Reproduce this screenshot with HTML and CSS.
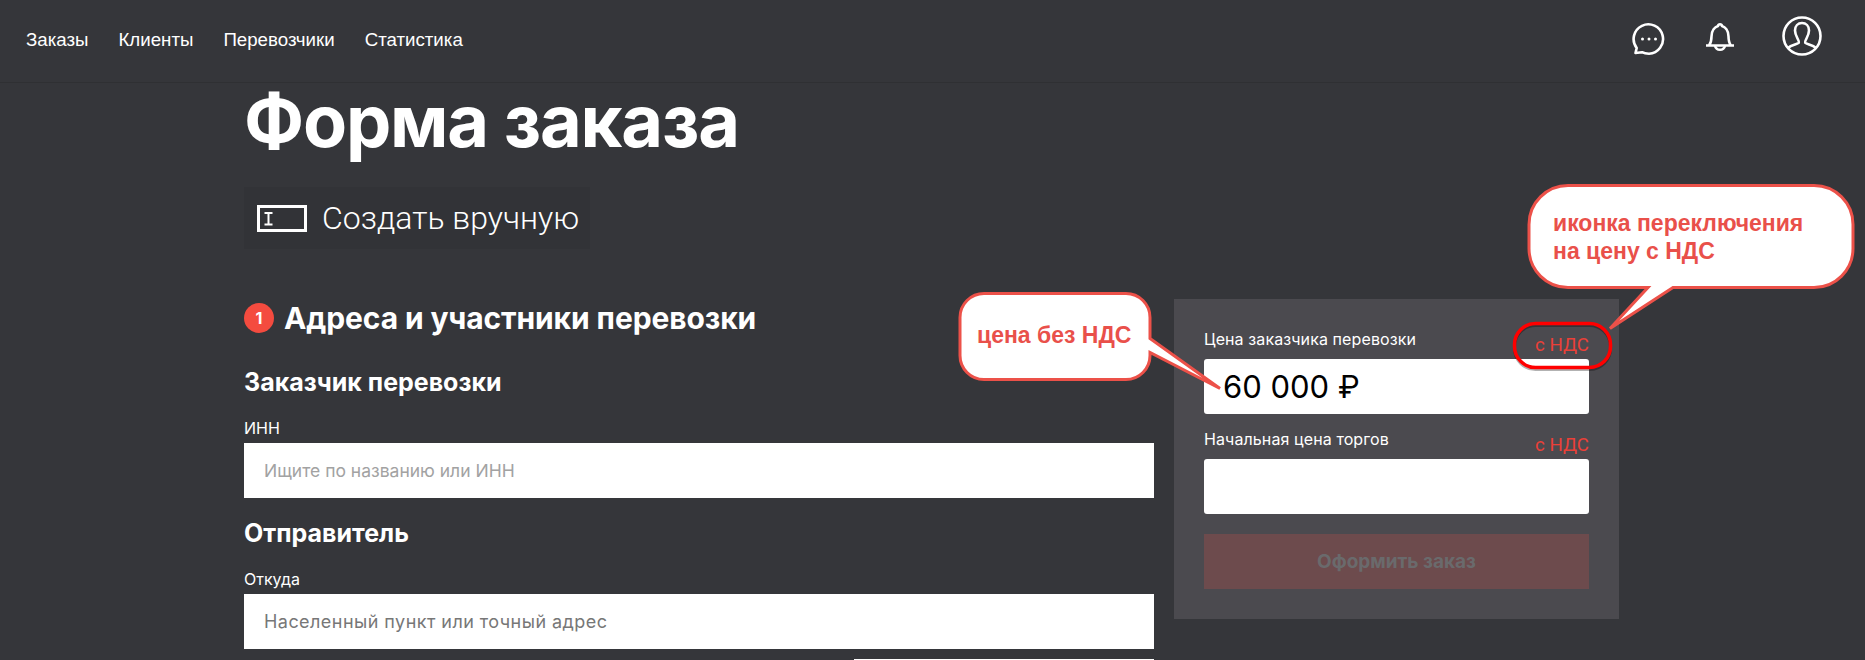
FILE: index.html
```html
<!DOCTYPE html>
<html lang="ru">
<head>
    <meta charset="UTF-8">
    <title>Форма заказа</title>
    <link rel="stylesheet" href="styles.css">
</head>
<body>
    <header class="topbar">
        <nav class="topnav">
            <a href="#">Заказы</a>
            <a href="#">Клиенты</a>
            <a href="#">Перевозчики</a>
            <a href="#">Статистика</a>
        </nav>
        <div class="topicons">
            <svg class="icon-chat" width="34" height="34" viewBox="0 0 34 34" fill="none" stroke="#fff" stroke-width="2.600">
                <path d="M3.500 31l1.200-5A14.700 14.700 0 1 1 17 31.700c-2.800 0-5-.4-7-1.500z" stroke-linejoin="round"/>
                <circle cx="10.500" cy="17" r="1.500" fill="#fff" stroke="none"/>
                <circle cx="17" cy="17" r="1.500" fill="#fff" stroke="none"/>
                <circle cx="23.500" cy="17" r="1.500" fill="#fff" stroke="none"/>
            </svg>
            <svg class="icon-bell" width="30" height="32" viewBox="0 0 30 32" fill="none" stroke="#fff" stroke-width="2.600">
                <path d="M1 23.500h28M4 23.500c2-2.500 2.500-4.500 2.500-9C6.500 8.500 10 5 13 4c.4-2.400 3.600-2.400 4 0 3 1 6.500 4.500 6.500 10.500 0 4.500.5 6.500 2.500 9" stroke-linejoin="round"/>
                <path d="M10 24a5.200 5.200 0 0 0 10 0"/>
            </svg>
            <svg class="icon-user" width="40" height="40" viewBox="0 0 40 40" fill="none" stroke="#fff" stroke-width="2.600">
                <circle cx="20" cy="20" r="18.500"/>
                <path d="M6 32c3-3 8-3.500 10.500-5 1-.8 0-2.500-1-4.500-1.800-3.500-2.500-5.500-2.500-8C13 10 16 7 20 7s7 3 7 7.500c0 2.500-.7 4.500-2.500 8-1 2-2 3.700-1 4.500 2.500 1.500 7.500 2 10.500 5"/>
            </svg>
        </div>
    </header>

    <main class="page">
        <h1>Форма заказа</h1>
        <button type="button" class="manual-btn">
            <svg width="50" height="27" viewBox="0 0 50 27" fill="none" stroke="#fff">
                <rect x="1.500" y="1.500" width="47" height="24" stroke-width="3"/>
                <path d="M7.500 8h8M7.500 19.500h8M11.500 8v11.500" stroke-width="2"/>
            </svg>
            <span>Создать вручную</span>
        </button>

        <div class="order-grid">
            <section class="order-form">
                <h2><span class="step">1</span>Адреса и участники перевозки</h2>

                <h3>Заказчик перевозки</h3>
                <div class="field">
                    <label for="inn">ИНН</label>
                    <input type="text" id="inn" placeholder="Ищите по названию или ИНН">
                </div>

                <h3>Отправитель</h3>
                <div class="field">
                    <label for="from">Откуда</label>
                    <input type="text" id="from" class="dark-hint" placeholder="Населенный пункт или точный адрес">
                </div>
                <div class="field-short">
                    <input type="text" id="contact">
                </div>
            </section>

            <aside class="price-panel">
                <div class="price-head">
                    <label for="price">Цена заказчика перевозки</label>
                    <a href="#" class="vat">с НДС</a>
                </div>
                <input type="text" id="price" class="price-value" value="60 000 ₽">

                <div class="price-head">
                    <label for="start">Начальная цена торгов</label>
                    <a href="#" class="vat">с НДС</a>
                </div>
                <input type="text" id="start" class="price-value">

                <button type="button" class="submit-btn" disabled>Оформить заказ</button>
            </aside>
        </div>
    </main>

    <!-- annotation shapes drawn over the screenshot -->
    <svg class="notes" width="1865" height="660" viewBox="0 0 1865 660">
        <path class="bubble" d="M984 293.500h142a24 24 0 0 1 24 24v21l70 50-70-36v3a24 24 0 0 1-24 24H984a24 24 0 0 1-24-24v-38a24 24 0 0 1 24-24z"/>
        <path class="bubble" d="M1568 185.500h246a39 39 0 0 1 39 39v24a39 39 0 0 1-39 39h-141l-63 41 38-41h-80a39 39 0 0 1-39-39v-24a39 39 0 0 1 39-39z"/>
        <rect class="ring-shadow" x="1514.500" y="325.500" width="96" height="44" rx="21"/>
        <rect class="ring" x="1514.500" y="323.500" width="96" height="44" rx="21"/>
    </svg>
    <div class="note note-price">цена без НДС</div>
    <div class="note note-switch">иконка переключения<br>на цену с НДС</div>
</body>
</html>
```

FILE: styles.css
```css
* {
    box-sizing: border-box;
}
html, body {
    height: 660px;
    overflow: hidden;
}
body {
    margin: 0;
    background-color: #35363a;
    color: #fff;
    font-family: Inter, "Liberation Sans", sans-serif;
}

/* top bar */
.topbar {
    display: flex;
    align-items: center;
    justify-content: space-between;
    height: 83px;
    padding: 0 43px 0 26px;
    border-bottom: 1px solid #2f3033;
}
.topnav {
    display: flex;
    gap: 30px;
    margin-top: -2px;
}
.topnav a {
    color: #fff;
    font-family: "Liberation Sans", sans-serif;
    font-size: 18.700px;
    text-decoration: none;
}
.topicons {
    display: flex;
    align-self: flex-start;
    align-items: flex-start;
}
.icon-chat {
    margin-top: 22px;
}
.icon-bell {
    margin: 22px 0 0 39px;
}
.icon-user {
    margin: 16px 0 0 47px;
}

/* page */
.page {
    padding-left: 244px;
}
h1 {
    margin: 0 0 28px;
    font-size: 72px;
    font-weight: 700;
    letter-spacing: -1.200px;
    line-height: 76px;
}
.manual-btn {
    display: flex;
    align-items: center;
    gap: 15px;
    width: 346px;
    height: 62px;
    padding: 0 13px;
    border: none;
    background-color: #323337;
    color: #fff;
    font-family: Roboto, sans-serif;
    font-size: 32px;
    font-weight: 300;
    white-space: nowrap;
}
.manual-btn svg {
    flex: none;
}
.order-grid {
    display: grid;
    grid-template-columns: 910px 445px;
    gap: 20px;
    margin-top: 50px;
}

/* left form */
h2 {
    display: flex;
    align-items: center;
    gap: 10px;
    height: 38px;
    margin: 0 0 27px;
    font-size: 30px;
    font-weight: 700;
    letter-spacing: -0.100px;
}
.step {
    display: flex;
    align-items: center;
    justify-content: center;
    width: 30px;
    height: 30px;
    border-radius: 50%;
    background-color: #f44b3f;
    font-size: 16px;
}
h3 {
    margin: 0 0 16px;
    font-size: 25px;
    font-weight: 700;
    line-height: 36px;
}
.field {
    margin-bottom: 17px;
}
.field label {
    display: block;
    height: 27px;
    font-size: 16px;
    line-height: 25px;
}
input {
    display: block;
    width: 100%;
    height: 55px;
    padding: 0 20px;
    border: none;
    background-color: #fff;
    font-family: Inter, sans-serif;
    font-size: 17.500px;
}
input::placeholder {
    color: #a2a2a2;
    opacity: 1;
}
input.dark-hint {
    font-size: 18px;
    letter-spacing: 0.450px;
}
input.dark-hint::placeholder {
    color: #777;
}
.field-short {
    margin: -7px 0 0 610px;
}

/* price panel */
.price-panel {
    height: 320px;
    padding: 29px 30px 0;
    background-color: #4b4a4f;
}
.price-head {
    display: flex;
    align-items: flex-end;
    justify-content: space-between;
    height: 31px;
    padding-bottom: 3px;
    font-size: 16px;
}
.price-head label {
    align-self: flex-start;
    letter-spacing: 0.100px;
    line-height: 22px;
}
.price-head + input + .price-head {
    height: 45px;
    padding-top: 14px;
}
.vat {
    color: #ea4038;
    font-family: Roboto, sans-serif;
    font-size: 18.700px;
    text-decoration: none;
}
.price-value {
    border-radius: 3px;
    padding: 0 19px;
    color: #000;
    font-size: 31px;
}
.submit-btn {
    display: block;
    width: 100%;
    height: 55px;
    margin-top: 20px;
    border: none;
    background-color: #6d4b4d;
    color: #6a6a6c;
    font-family: Inter, sans-serif;
    font-size: 19px;
    font-weight: 700;
}

/* annotations */
.notes {
    position: absolute;
    left: 0;
    top: 0;
}
.bubble {
    fill: #fff;
    stroke: #ec5149;
    stroke-width: 3;
}
.ring {
    fill: none;
    stroke: #f00;
    stroke-width: 3.500;
}
.ring-shadow {
    fill: none;
    stroke: rgba(0, 0, 0, 0.3);
    stroke-width: 3;
}
.note {
    position: absolute;
    color: #e9504a;
    font-family: "Liberation Sans", sans-serif;
    font-size: 23px;
    font-weight: 700;
    line-height: 28px;
}
.note-price {
    left: 977px;
    top: 321px;
}
.note-switch {
    left: 1553px;
    top: 209px;
}
```
